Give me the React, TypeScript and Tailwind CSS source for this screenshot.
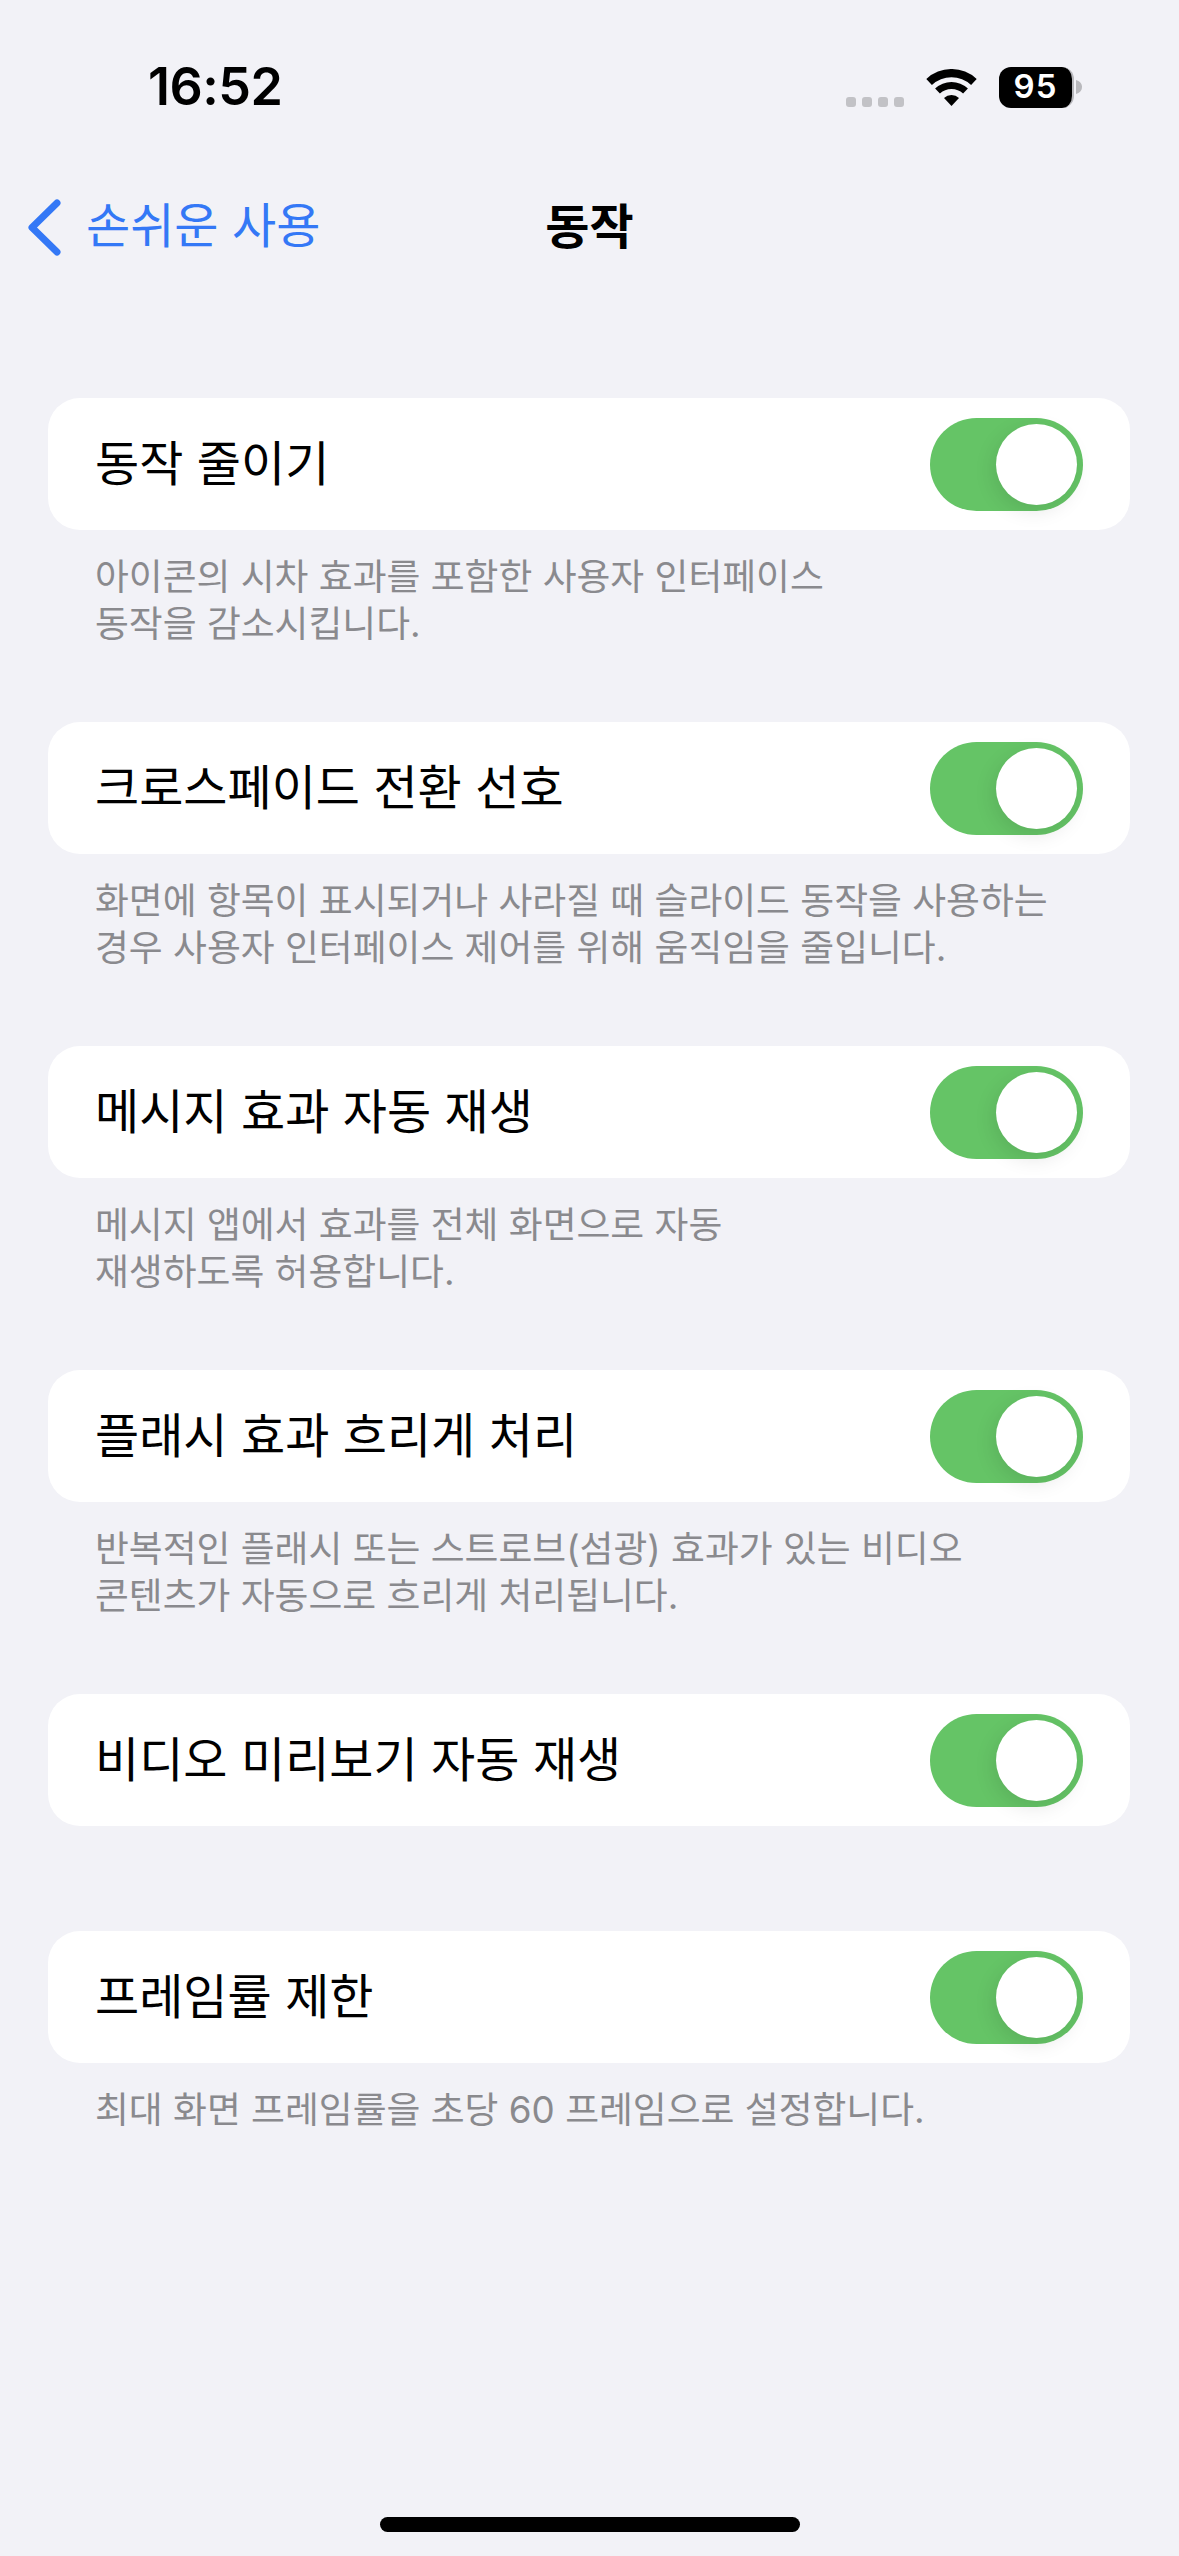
const sections = [
  {
    label: "동작 줄이기",
    note: ["아이콘의 시차 효과를 포함한 사용자 인터페이스", "동작을 감소시킵니다."],
  },
  {
    label: "크로스페이드 전환 선호",
    note: ["화면에 항목이 표시되거나 사라질 때 슬라이드 동작을 사용하는", "경우 사용자 인터페이스 제어를 위해 움직임을 줄입니다."],
  },
  {
    label: "메시지 효과 자동 재생",
    note: ["메시지 앱에서 효과를 전체 화면으로 자동", "재생하도록 허용합니다."],
  },
  {
    label: "플래시 효과 흐리게 처리",
    note: ["반복적인 플래시 또는 스트로브(섬광) 효과가 있는 비디오", "콘텐츠가 자동으로 흐리게 처리됩니다."],
  },
  { label: "비디오 미리보기 자동 재생", note: [] },
  { label: "프레임률 제한", note: ["최대 화면 프레임률을 초당 60 프레임으로 설정합니다."] },
];

function Toggle() {
  return (
    <div className="flex h-[93px] w-[153px] items-center justify-end rounded-full bg-[#65c466] pr-[6px]">
      <div className="h-[81px] w-[81px] rounded-full bg-white shadow-[-3px_6px_20px_rgba(0,0,0,0.1)]" />
    </div>
  );
}

function Row({ label, note }: { label: string; note: string[] }) {
  return (
    <section>
      <div className="flex h-[132px] items-center justify-between rounded-[32px] bg-white pl-[47px] pr-[47px]">
        <span className="text-[48px] leading-none text-black">{label}</span>
        <Toggle />
      </div>
      {note.length > 0 && (
        <p className="pl-[47px] pt-[23px] text-[36.8px] leading-[47px] text-[#8a8a8e]">
          {note.map((line) => (
            <span key={line} className="block">
              {line}
            </span>
          ))}
        </p>
      )}
    </section>
  );
}

function StatusBar() {
  return (
    <div className="flex h-[177px] items-start justify-between pl-[148px] pr-[97px] pt-[52px]">
      <span className="text-[52px] leading-[70px] font-semibold tracking-[-0.5px] text-black">16:52</span>
      <div className="flex h-[70px] items-center">
        <div className="mt-[30px] mr-[22px] flex gap-[6px]">
          <i className="h-[10px] w-[10px] rounded-[3px] bg-[#c2c2c6]" />
          <i className="h-[10px] w-[10px] rounded-[3px] bg-[#c2c2c6]" />
          <i className="h-[10px] w-[10px] rounded-[3px] bg-[#c2c2c6]" />
          <i className="h-[10px] w-[10px] rounded-[3px] bg-[#c2c2c6]" />
        </div>
        <svg width="51" height="37" viewBox="0 0 51 37" className="mr-[22px]" fill="#000">
          <path d="M0.3 9.9 A37 37 0 0 1 50.7 9.9 L45.1 16 A28.7 28.7 0 0 0 5.9 16 Z" />
          <path d="M9.1 19.5 A24 24 0 0 1 41.9 19.5 L37.1 24.6 A17 17 0 0 0 13.9 24.6 Z" />
          <path d="M18 29 A11 11 0 0 1 33 29 L25.5 37 Z" />
        </svg>
        <div className="flex h-[41px] w-[75px] items-center justify-center rounded-[12px] border-r-2 border-[#b9b9bd] bg-black text-[33px] font-semibold tracking-[1px] text-white">
          95
        </div>
        <svg width="6" height="14" viewBox="0 0 6 14" className="ml-[2px]">
          <path d="M0 0 C3.5 1 6 3.5 6 7 C6 10.5 3.5 13 0 14 Z" fill="#b9b9bd" />
        </svg>
      </div>
    </div>
  );
}

function NavBar() {
  return (
    <div className="grid h-[100px] grid-cols-[1fr_auto_1fr] items-center">
      <div className="flex items-center pl-[28px] text-[#3478f6]">
        <svg width="33" height="57" viewBox="0 0 33 57" fill="none">
          <path
            d="M29 4 L4 28.5 L29 53"
            stroke="#3478f6"
            strokeWidth="7"
            strokeLinecap="round"
            strokeLinejoin="round"
          />
        </svg>
        <span className="ml-[25px] -translate-y-px text-[48px] leading-none">손쉬운 사용</span>
      </div>
      <span className="text-[48px] leading-none font-semibold text-black">동작</span>
      <div />
    </div>
  );
}

export default function App() {
  return (
    <div
      className="flex min-h-[2556px] w-[1179px] flex-col bg-[#f2f2f7]"
      style={{ fontFamily: 'Inter, "Noto Sans CJK KR", sans-serif' }}
    >
      <StatusBar />
      <NavBar />
      <main className="flex flex-col pl-[48px] pr-[49px] pt-[121px]">
        {sections.map((s, i) => (
          <div key={s.label} className={i === 0 ? "" : i === 5 ? "mt-[105px]" : "mt-[75px]"}>
            <Row label={s.label} note={s.note} />
          </div>
        ))}
      </main>
      <div className="mt-auto flex justify-center pb-[24px]">
        <div className="h-[15px] w-[420px] rounded-full bg-black" />
      </div>
    </div>
  );
}
